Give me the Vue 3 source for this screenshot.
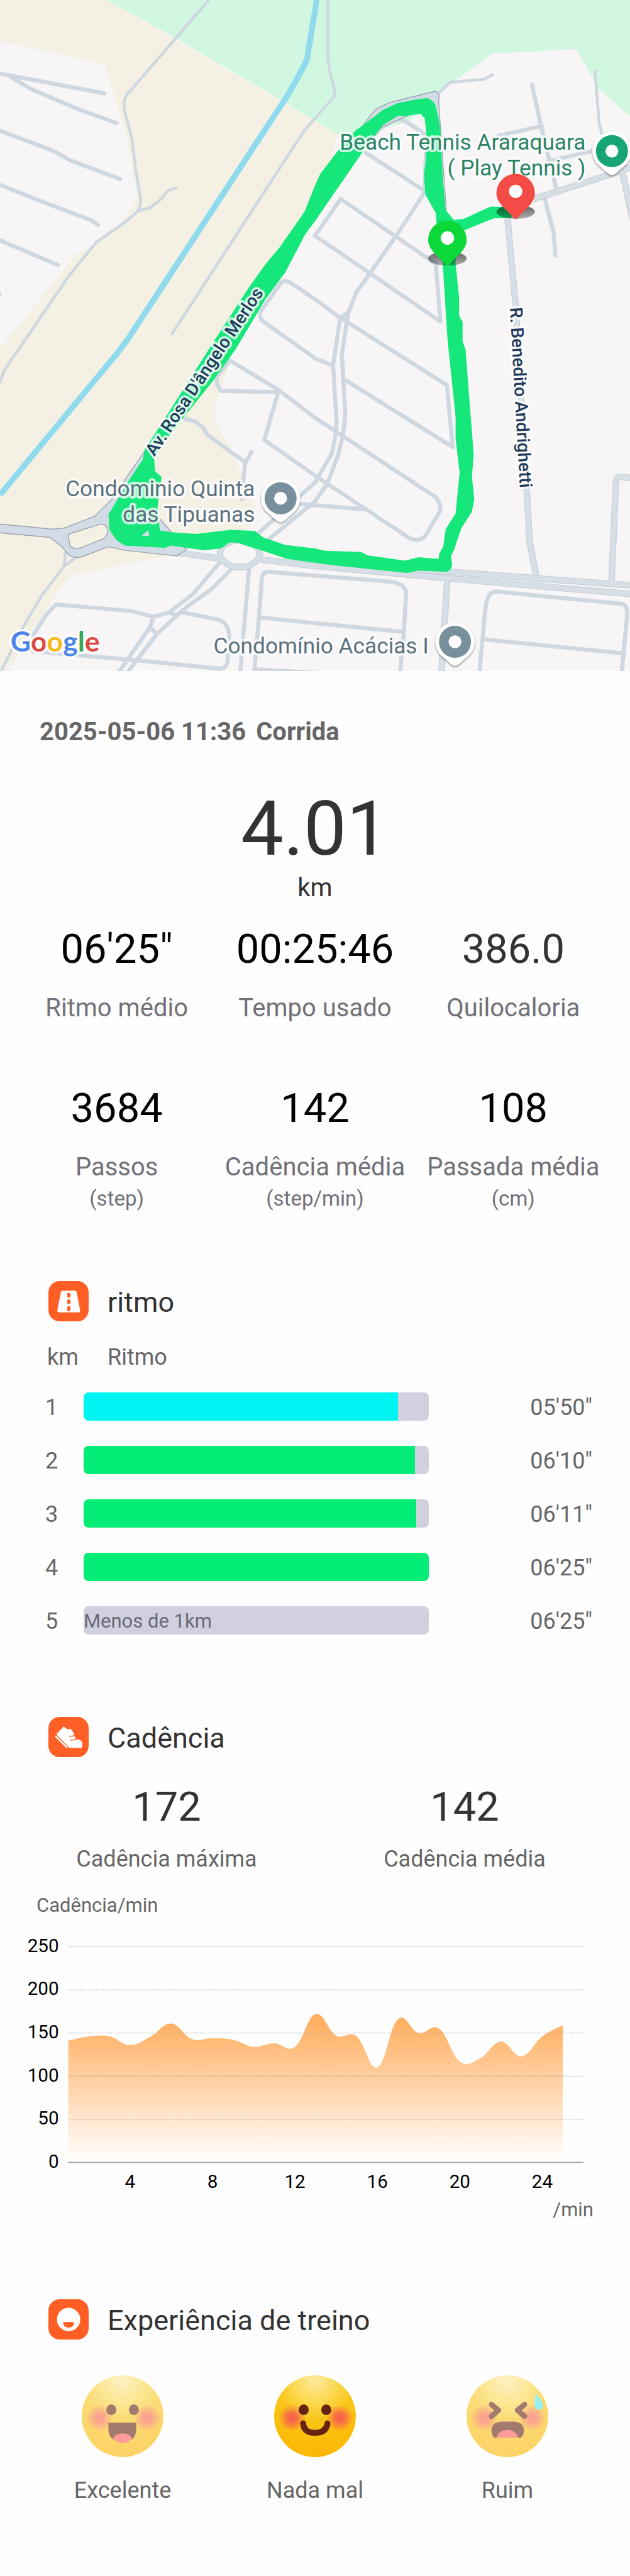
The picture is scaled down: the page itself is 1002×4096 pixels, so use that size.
<script setup>
import { ref } from 'vue'

const summary = [
  { value: '06\'25"', label: 'Ritmo médio' },
  { value: '00:25:46', label: 'Tempo usado' },
  { value: '386.0', label: 'Quilocaloria', soft: true },
  { value: '3684', label: 'Passos', unit: '(step)' },
  { value: '142', label: 'Cadência média', unit: '(step/min)' },
  { value: '108', label: 'Passada média', unit: '(cm)' },
]

const laps = [
  { km: 1, pace: '05\'50"', fill: 91, tone: 'fast' },
  { km: 2, pace: '06\'10"', fill: 96, tone: 'steady' },
  { km: 3, pace: '06\'11"', fill: 96.4, tone: 'steady' },
  { km: 4, pace: '06\'25"', fill: 100, tone: 'steady' },
  { km: 5, pace: '06\'25"', fill: 0, note: 'Menos de 1km' },
]

// Steps per minute, one sample for each minute of the run
const cadence = [
  141, 146, 146, 136, 146, 161, 143, 144, 142, 134, 138, 134, 172,
  147, 146, 110, 166, 150, 155, 117, 121, 140, 123, 146, 159,
]
const chart = { left: 117, right: 1000, base: 397, unit: 1.478, step: 35.33 }
const yTicks = [250, 200, 150, 100, 50, 0]
const xTicks = [4, 8, 12, 16, 20, 24]
const xOf = (minute) => chart.left + (minute - 1) * chart.step
const yOf = (value) => chart.base - value * chart.unit

const points = cadence.map((v, i) => [xOf(i + 1), yOf(v)])
const at = (i) => points[Math.min(Math.max(i, 0), points.length - 1)]
let area = `M${chart.left} ${chart.base} L${points[0].join(' ')}`
for (let i = 1; i < points.length; i++) {
  const [a, b, c, d] = [at(i - 2), at(i - 1), at(i), at(i + 1)]
  const k = 0.2
  area += ` C${b[0] + (c[0] - a[0]) * k} ${b[1] + (c[1] - a[1]) * k}`
  area += ` ${c[0] - (d[0] - b[0]) * k} ${c[1] - (d[1] - b[1]) * k} ${c[0]} ${c[1]}`
}
area += ` V${chart.base} Z`

const moods = [
  { id: 'great', label: 'Excelente' },
  { id: 'good', label: 'Nada mal' },
  { id: 'bad', label: 'Ruim' },
]
const mood = ref('good')

const pois = [
  { x: 1049, y: 259, color: '#17a673' },
  { x: 481, y: 854, color: '#78909c' },
  { x: 780, y: 1100, color: '#78909c' },
]
const markers = [
  { x: 884, y: 331, color: '#f54b46' },
  { x: 767, y: 411, color: '#0cd839' },
]
</script>

<template>
  <main class="page">
    <svg class="map" viewBox="0 0 1080 1150" role="img" aria-label="Mapa do percurso">
      <defs>
        <linearGradient id="pin-shade" x1="0" x2="0" y1="0" y2="1">
          <stop offset="0" stop-color="#000" stop-opacity=".6" />
          <stop offset="1" stop-color="#000" stop-opacity=".3" />
        </linearGradient>
        <filter id="poi-shadow" x="-30%" y="-30%" width="160%" height="160%">
          <feDropShadow dx="0" dy="2" stdDeviation="2" flood-color="#000" flood-opacity=".45" />
        </filter>
      </defs>
      <rect width="1080" height="1150" fill="#f7f5f6" />
      <path fill="#f4f0e4" d="M0 0H183L578 230L560 330L400 590L396 618L370 691V722L396 771L439 871L425 915L275 955L120 986L86 1035L45 1097L14 1150H0Z" />
      <path fill="#f7f5f6" d="M0 71L179 110L217 230L236 341L207 383L155 423L131 436L0 597Z" />
      <path fill="#d2f7e1" d="M183 0L300 65L482 172L578 230L620 240L652 224L683 219L700 208L781 138L843 92L988 84L1027 153L1080 199V0Z" />
      <path fill="#f7f5f6" d="M652 224L683 205L731 215L752 160L781 138L800 240L640 300L600 280Z" />
      <path fill="#d2f7e1" d="M660 219L692 211L684 203L668 208Z" />

      <path class="water" d="M543 0L526 103Q510 135 492 165L220 580L203 603L0 848" />
      <path class="path" d="M358 0L217 163Q211 172 213 188L226 237L233 293L241 341Q242 352 236 362L213 382L165 415L118 473L31 600L7 635L0 655M236 362L257 356L274 343L289 326L302 322M562 0V100L566 125L574 158Q574 165 570 169L540 203L520 226L295 572" />
      <path class="path" d="M112 947L110 970L72 1020L38 1077L2 1150M128 957L110 970" />
      <g class="street">
        <path d="M0 126L179 160M14 129L52 152L131 186L200 211M0 224L90 258L121 275L206 307M0 317L55 339L155 377L168 385M0 412L99 454M-2 505H-1" />
        <path d="M571 627L540 614L451 551Q443 543 446 535L482 484Q488 479 499 485L540 513L581 543L766 660L776 766L588 649" />
        <path d="M394 618L477 668L540 716L747 852Q756 864 755 875L728 920Q716 930 700 921L561 829L540 815L453 754L477 672L379 670Q369 657 372 645L394 618" />
        <path d="M317 718L334 722L348 733L355 745L420 792M431 775L420 794L417 825M414 855H415" />
        <path d="M583 545L571 626L577 722L576 741L569 777L540 827L444 913M597 536L586 607L592 710L588 745L580 779L561 829L540 859L461 924M583 545L597 536" />
        <path d="M731 325L678 406L631 473L611 501L597 536M627 262L728 327L731 235M540 404L584 341L747 452L755 551L540 404M640 233Q662 208 681 205Q688 204 700 211L728 230M480 861L626 873" />
        <path d="M436 1150L444 1058L449 989Q451 980 460 980L671 997Q697 1002 696 1018L692 1089L686 1150M444 1058L540 1068L692 1083M436 1147L540 1153M427 974L412 1150" />
        <path d="M822 1150L831 1054C833 1030 836 1012 853 1014L1067 1035Q1076 1037 1075 1055L1066 1150M831 1096L1070 1120" />
        <path d="M57 1089L79 1054L96 1036L224 1047L263 1057L289 1050L331 1018L375 966M263 1058L257 1075L269 1087L306 1052L323 1038L362 1010L396 976M257 1075L205 1150M269 1087L220 1150M289 1050L303 1054L310 1049L375 1062C388 1066 393 1080 393 1090L390 1135Q386 1147 375 1146L238 1132L57 1116" />
        <path d="M941 276L1019 258M853 233L929 216M912 145L927 214L941 272L953 321M934 341L949 398L952 438" />
      </g>
      <path class="path" d="M752 159L772 141L829 136L845 128M1020 122L1027 210L1032 230" />
      <g class="avenue-edge">
        <path d="M915 341L1043 300L1080 287M1067 295L1084 375M870 375L884 524L903 840L908 928L919 986V1005" />
        <path d="M600 968L774 980L877 988L1080 1003M290 945L375 957M448 959L540 970L767 991L1080 1018M767 990L757 1150M1048 1001L1056 825Q1057 817 1063 817L1080 819" />
        <ellipse cx="411" cy="949" rx="34" ry="23" />
      </g>
      <g class="avenue">
        <path d="M915 341L1043 300L1080 287M1067 295L1084 375M870 375L884 524L903 840L908 928L919 986V1005" />
        <path d="M600 968L774 980L877 988L1080 1003M290 945L375 957M448 959L540 970L767 991L1080 1018M767 990L757 1150M1048 1001L1056 825Q1057 817 1063 817L1080 819" />
        <ellipse cx="411" cy="949" rx="34" ry="23" />
      </g>
      <path class="highway" d="M-2 898L91 907L110 905L162 885L189 859L248 773H262L240 850L320 942L303 953L213 943L186 937L138 955Q125 957 118 951L105 936L86 921L-2 913Z" />
      <path fill="#f4f0e4" stroke="#9ba5af" stroke-width="1.5" d="M117 919Q117 916 122 914L170 899Q182 897 184 906Q186 917 178 923L138 939Q128 942 120 936Z" />
      <path class="highway" d="M623 214L643 188L667 176L747 156L753 163L752 175L765 360L750 340L740 180L650 220Z" />

      <path
        fill="#15e77a"
        fill-rule="evenodd"
        d="M540 318L549 298L578 260L609 224L623 214L657 188L681 177L709 171L733 168Q745 174 747 182L751 199L755 222L759 306L764 360L778 377L795 375L841 354L871 355L879 367L876 374H847L800 393L781 402V452L787 509V541L793 551V585L798 599L812 779L809 817L813 855L809 877L791 905L778 943L773 953L775 966Q775 977 766 980L717 978L698 982L574 969L492 958L448 943L437 940L406 930H393L379 940L350 943L293 935L282 939L214 935L200 926L188 909L186 882L220 825L245 787L248 771L370 580L427 492L455 453L480 423L522 363Z
        M540 379L523 402L489 467L455 513L403 600L365 653L276 764L264 785L266 808L277 817L270 869L274 909L293 912L336 915L396 908L437 910L451 921L489 934L540 940L557 944L619 946L631 952L695 961L717 955L752 958L753 949L760 936L764 907L781 880L788 810L781 752V714L767 580L759 452L748 379L747 365L729 333L727 298L730 276L731 230L728 203L721 195L692 199L683 198L657 214L626 254Z
        M243 918L254 909L256 919Z"
      />

      <g class="street-name">
        <text transform="translate(265 783) rotate(-56.3)">Av. Rosa D'ângelo Merlos</text>
        <text transform="translate(874 527) rotate(86.8)">R. Benedito Andrighetti</text>
      </g>
      <g class="place green">
        <text x="1004" y="256">Beach Tennis Araraquara</text>
        <text x="1004" y="301">( Play Tennis )</text>
      </g>
      <g class="place">
        <text x="437" y="850">Condominio Quinta</text>
        <text x="437" y="895">das Tipuanas</text>
        <text x="735" y="1120">Condomínio Acácias I</text>
      </g>

      <g v-for="p in pois" :key="p.x" :transform="`translate(${p.x} ${p.y})`">
        <path filter="url(#poi-shadow)" fill="#fff" d="M0 -33A33 33 0 0 1 25 22L7 38Q0 44 -7 38L-25 22A33 33 0 0 1 0 -33Z" />
        <circle r="27.5" :fill="p.color" />
        <circle r="11" fill="#fff" />
      </g>
      <g v-for="m in markers" :key="m.x" :transform="`translate(${m.x} ${m.y})`">
        <ellipse cy="32" rx="33" ry="12" fill="url(#pin-shade)" />
        <path :fill="m.color" d="M0 -33A33 33 0 0 1 33 0C33 18 14 29 4 42Q0 46 -4 42C-14 29 -33 18 -33 0A33 33 0 0 1 0 -33Z" />
        <circle cy="-3" r="11.5" fill="#fff" />
      </g>

      <text class="brand" x="18" y="1117">
        <tspan fill="#4a86e8">G</tspan><tspan fill="#db4a3f">o</tspan><tspan fill="#f4bb17">o</tspan><tspan fill="#4a86e8">g</tspan><tspan fill="#3aa757">l</tspan><tspan fill="#db4a3f">e</tspan>
      </text>
    </svg>

    <header class="summary">
      <h1 class="date"><span>2025-05-06 11:36</span><span>Corrida</span></h1>
      <p class="distance">4.01</p>
      <p class="distance-unit">km</p>
      <dl class="stats">
        <div v-for="s in summary" :key="s.label" class="stat">
          <dd class="value" :class="{ soft: s.soft }">{{ s.value }}</dd>
          <dt class="label">{{ s.label }}</dt>
          <dd v-if="s.unit" class="unit">{{ s.unit }}</dd>
        </div>
      </dl>
    </header>

    <section class="pace">
      <div class="heading">
        <svg class="badge" viewBox="0 0 207 207" aria-hidden="true">
          <rect width="207" height="207" rx="58" fill="#ff5f25" />
          <path d="M74 49H135Q143 49 145 57L163 149Q164 161 154 161H55Q45 161 46 149L64 57Q66 49 74 49Z" fill="#fff" />
          <path d="M105 68V77M105 102V111M105 137V146" stroke="#ff5f25" stroke-width="17" stroke-linecap="round" />
        </svg>
        <h2>ritmo</h2>
      </div>
      <table class="laps">
        <thead>
          <tr><th scope="col">km</th><th scope="col">Ritmo</th></tr>
        </thead>
        <tbody>
          <tr v-for="lap in laps" :key="lap.km">
            <td>{{ lap.km }}</td>
            <td class="track">
              <span v-if="lap.note" class="note">{{ lap.note }}</span>
              <div v-else class="fill" :class="lap.tone" :style="{ width: lap.fill + '%' }"></div>
            </td>
            <td class="time">{{ lap.pace }}</td>
          </tr>
        </tbody>
      </table>
    </section>

    <section class="cadence">
      <div class="heading">
        <svg class="badge" viewBox="0 0 207 207" aria-hidden="true">
          <rect width="207" height="207" rx="58" fill="#ff5f25" />
          <path d="M79 51L94 63Q104 67 114 62L127 80L132 93L106 97Q101 101 107 104L134 101L140 111L114 117Q110 122 116 124L145 118Q170 115 173 137V153Q173 158 167 158H108L45 92V86Z" fill="#fff" stroke="#fff" stroke-width="3" stroke-linejoin="round" />
          <path d="M38 100L95 157" stroke="#fff" stroke-width="8" stroke-linecap="round" />
        </svg>
        <h2>Cadência</h2>
      </div>
      <dl class="pair">
        <div class="stat"><dd class="value soft">172</dd><dt class="caption">Cadência máxima</dt></div>
        <div class="stat"><dd class="value soft">142</dd><dt class="caption">Cadência média</dt></div>
      </dl>
      <p class="axis-title">Cadência/min</p>
      <svg class="chart" viewBox="0 0 1080 455" role="img" aria-label="Cadência por minuto">
        <defs>
          <linearGradient id="cadence-fill" x1="0" x2="0" y1="0" y2="1">
            <stop offset="0" stop-color="#ffab59" />
            <stop offset="1" stop-color="#fff" />
          </linearGradient>
        </defs>
        <path :d="area" fill="url(#cadence-fill)" />
        <g v-for="t in yTicks" :key="t">
          <line :x1="chart.left" :x2="chart.right" :y1="yOf(t)" :y2="yOf(t)" :class="t ? 'grid' : 'base'" />
          <text x="101" :y="yOf(t) + 9" text-anchor="end">{{ t }}</text>
        </g>
        <text v-for="t in xTicks" :key="t" :x="xOf(t)" y="441" text-anchor="middle">{{ t }}</text>
      </svg>
      <p class="axis-title end">/min</p>
    </section>

    <section class="experience">
      <div class="heading">
        <svg class="badge" viewBox="0 0 207 207" aria-hidden="true">
          <rect width="207" height="207" rx="58" fill="#ff5f25" />
          <circle cx="104" cy="104" r="60" fill="#fff" />
          <path d="M75 117H133Q131 145 104 146Q77 145 75 117Z" fill="#ff5f25" />
        </svg>
        <h2>Experiência de treino</h2>
      </div>
      <div class="moods">
        <button
          v-for="m in moods"
          :key="m.id"
          type="button"
          class="mood"
          :aria-pressed="mood === m.id"
          @click="mood = m.id"
        >
          <svg class="face" :class="{ faded: mood !== m.id }" viewBox="0 0 138 138" aria-hidden="true">
            <defs>
              <radialGradient :id="'skin-' + m.id" cx=".5" cy=".06" r=".95">
                <stop offset="0" stop-color="#ffeb9e" />
                <stop offset=".28" stop-color="#fbd951" />
                <stop offset=".52" stop-color="#f9c516" />
                <stop offset="1" stop-color="#fdb602" />
              </radialGradient>
              <radialGradient :id="'blush-' + m.id">
                <stop offset="0" stop-color="#f8604e" />
                <stop offset=".35" stop-color="#f8604e" stop-opacity=".85" />
                <stop offset="1" stop-color="#f8604e" stop-opacity="0" />
              </radialGradient>
            </defs>
            <circle cx="69" cy="69" r="69" :fill="`url(#skin-${m.id})`" />
            <circle cx="30" cy="72" r="23" :fill="`url(#blush-${m.id})`" />
            <circle cx="111" cy="72" r="23" :fill="`url(#blush-${m.id})`" />
            <g v-if="m.id !== 'bad'" fill="#66230f">
              <ellipse cx="50" cy="58" rx="8.5" ry="9" />
              <ellipse cx="88" cy="58" rx="8.5" ry="9" />
            </g>
            <template v-if="m.id === 'great'">
              <path d="M45 80H92V90Q92 103 85 108L69 113L53 108Q45 103 45 90Z" fill="#66230f" />
              <path d="M53 107C56 95 82 95 85 107Q78 114 69 114Q60 114 53 107Z" fill="#ff5a56" />
            </template>
            <path v-else-if="m.id === 'good'" d="M49 81Q50 97 69 97Q88 97 90 81" fill="none" stroke="#66230f" stroke-width="10" stroke-linecap="round" />
            <template v-else>
              <path d="M42 49L54 59L42 69M98 49L86 59L98 69" fill="none" stroke="#66230f" stroke-width="9" stroke-linecap="round" stroke-linejoin="round" />
              <path d="M58 78H81Q97 80 97 93Q97 100 92 105H47Q42 100 42 93Q42 80 58 78Z" fill="#66230f" />
              <path d="M51 105Q55 92 69 92Q83 92 87 105Z" fill="#ff5a56" />
              <path d="M117 31Q129 44 129 51Q129 58 122 58Q115 58 115 50Q115 43 117 31Z" fill="#4fe6f2" />
            </template>
          </svg>
          <span class="caption">{{ m.label }}</span>
        </button>
      </div>
    </section>
  </main>
</template>

<style>
body {
  margin: 0;
  background: #fefefe;
}
</style>

<style scoped>
.page {
  font-family: Roboto, "Liberation Sans", sans-serif;
  color: #333;
  background: #fefefe;
}
h1, h2, p, dl, dd {
  margin: 0;
}
h1, h2, th {
  font-weight: 400;
}
.map, .chart {
  display: block;
  width: 100%;
  height: auto;
}
.water { fill: none; stroke: #90daee; stroke-width: 10; }
.path, .street { fill: none; stroke: #cfd8e1; stroke-width: 5; stroke-linecap: round; stroke-linejoin: round; }
.street { stroke-width: 7; }
.avenue, .avenue-edge { fill: none; stroke: #d6dfe6; stroke-width: 9; stroke-linejoin: round; }
.avenue-edge { stroke: #c3ccd3; stroke-width: 11; }
.highway { fill: #d2dce6; stroke: #9ba5af; stroke-width: 1.5; stroke-linejoin: round; }
.street-name text, .place text, .brand {
  paint-order: stroke;
  stroke: rgba(255, 255, 255, 0.8);
  stroke-width: 8px;
  stroke-linejoin: round;
}
.street-name text { font-size: 30px; font-weight: 500; fill: #1f3a5a; }
.place text { font-size: 38px; fill: #5b717d; text-anchor: end; }
.place.green text { fill: #2a8465; }
.brand { font-family: Lato, Roboto, sans-serif; font-size: 48px; font-weight: 700; }

.summary {
  padding-top: 73px;
  text-align: center;
}
.date {
  display: flex;
  gap: 16px;
  padding: 0 63px;
  font-size: 40px;
  font-weight: 700;
  line-height: 48px;
  color: #666;
}
.distance {
  margin-top: 60px;
  font-size: 121px;
  line-height: 140px;
}
.distance-unit {
  font-size: 40px;
  line-height: 48px;
}
.stats {
  display: grid;
  grid-template-columns: repeat(3, 1fr);
  row-gap: 97px;
  margin-top: 35px;
  padding: 0 28px;
}
.stat {
  display: flex;
  flex-direction: column;
  align-items: center;
  white-space: nowrap;
}
.value {
  font-size: 65px;
  line-height: 76px;
  color: #000;
}
.value.soft {
  color: #333;
}
.label {
  margin-top: 32px;
  font-size: 40px;
  line-height: 48px;
  color: #727178;
}
.unit {
  margin-top: 6px;
  font-size: 33px;
  line-height: 40px;
  color: #727178;
}

.pace, .cadence {
  padding-top: 111px;
}
.heading {
  display: flex;
  gap: 30px;
  padding: 0 77px;
}
.badge {
  width: 64px;
  height: 64px;
}
.heading h2 {
  padding-top: 4px;
  font-size: 45px;
  line-height: 60px;
}
.laps {
  display: block;
  margin-top: 35px;
  padding: 0 60px 0 72px;
  font-size: 36px;
  line-height: 44px;
  color: #666;
}
.laps thead, .laps tbody {
  display: block;
}
.laps thead {
  padding-bottom: 14px;
}
.laps tr {
  display: grid;
  grid-template-columns: 61px 549fr 260fr;
  align-items: center;
}
.laps thead tr {
  grid-template-columns: 96px 1fr;
  text-align: left;
}
.laps tbody tr {
  height: 85px;
}
.laps th {
  padding: 0 0 0 3px;
}
.laps td {
  padding: 4px 0 0;
}
.laps .track {
  height: 45px;
  padding: 0;
  border-radius: 8px;
  overflow: hidden;
  background: #d1d0df;
}
.fill {
  height: 100%;
}
.fast {
  background: #00f5f2;
}
.steady {
  background: #04ed76;
}
.note {
  display: block;
  font-size: 31px;
  line-height: 48px;
  color: #6b6a78;
}
.time {
  text-align: right;
}

.pair {
  display: grid;
  grid-template-columns: repeat(2, 1fr);
  margin-top: 41px;
  padding: 0 26px 0 28px;
}
.caption {
  margin-top: 23px;
  font-size: 36px;
  line-height: 44px;
  color: #666;
}
.axis-title {
  margin-top: 32px;
  padding: 0 58px;
  font-size: 31px;
  line-height: 40px;
  color: #666;
}
.axis-title.end {
  margin-top: 2px;
  text-align: right;
}
.chart {
  margin-top: 20px;
}
.chart text {
  font-size: 32px;
  fill: #000;
}
.grid {
  stroke: #999;
  stroke-width: 1;
  stroke-dasharray: 1 1;
}
.base {
  stroke: #a6a6a6;
  stroke-width: 2;
}

.experience {
  padding: 122px 0 113px;
}
.moods {
  display: grid;
  grid-template-columns: repeat(3, 1fr);
  margin-top: 57px;
  padding: 0 42px;
}
.mood {
  display: flex;
  flex-direction: column;
  align-items: center;
  padding: 0;
  border: 0;
  background: none;
  font: inherit;
  cursor: pointer;
}
.mood .caption {
  margin-top: 31px;
}
.face {
  width: 130px;
  height: 130px;
}
.face.faded {
  opacity: 0.6;
}
</style>
